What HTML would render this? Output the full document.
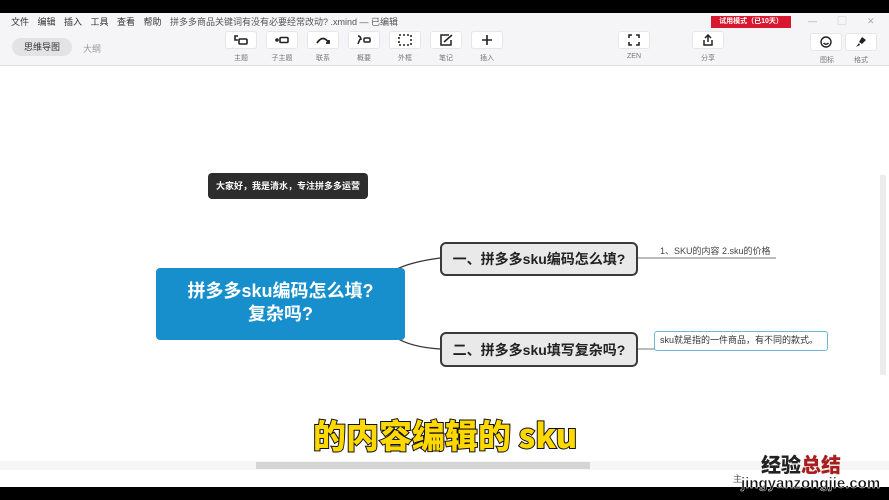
<!DOCTYPE html>
<html><head><meta charset="utf-8"><style>
*{margin:0;padding:0;box-sizing:border-box}
body{width:889px;height:500px;position:relative;overflow:hidden;background:#fff;font-family:"Liberation Sans","Noto Sans CJK SC",sans-serif;color:#333}
.a{position:absolute}
.tb{position:absolute;top:31px;width:32px;height:18px;border:1px solid #e6e6e6;border-radius:3px;background:#fff;display:flex;align-items:center;justify-content:center}
.tl{position:absolute;top:53px;font-size:7px;color:#777;width:40px;text-align:center}
.node{position:absolute;background:#e9e9e9;border:2px solid #3a3a3a;border-radius:6px;font-weight:bold;font-size:14px;color:#222;display:flex;align-items:center;justify-content:center}
svg.i{width:16px;height:12px}
</style></head><body>
<div class="a" style="left:0;top:0;width:889px;height:13px;background:#000"></div>
<div class="a" style="left:0;top:13px;width:889px;height:53px;background:#f5f5f7;border-bottom:1px solid #e2e2e2"></div>
<div class="a" style="left:11px;top:15px;font-size:9px;color:#333;word-spacing:6px;white-space:nowrap">文件 编辑 插入 工具 查看 帮助 <span style="word-spacing:0;color:#555">拼多多商品关键词有没有必要经常改动? .xmind — 已编辑</span></div>
<div class="a" style="left:711px;top:16px;width:80px;height:12px;background:#d8182e;color:#fff;font-size:7px;font-weight:bold;text-align:center;line-height:12px">试用模式（已10天）</div>
<div class="a" style="left:808px;top:14px;font-size:9px;color:#aaa;word-spacing:18px">— ▢ ✕</div>
<div class="a" style="left:12px;top:38px;width:60px;height:18px;border-radius:9px;background:#e3e3e5;font-size:9px;color:#333;text-align:center;line-height:18px">思维导图</div>
<div class="a" style="left:83px;top:42px;font-size:9px;color:#999">大纲</div>
<div class="tb" style="left:225px"><svg class="i" viewBox="0 0 16 12" fill="none" stroke="#222" stroke-width="1.6"><path d="M5 2H2v4h3"/><rect x="6" y="5" width="8" height="5" rx="1"/></svg></div><div class="tl" style="left:221px">主题</div>
<div class="tb" style="left:266px"><svg class="i" viewBox="0 0 16 12" fill="none" stroke="#222" stroke-width="1.6"><circle cx="3" cy="6" r="1" fill="#222"/><rect x="6" y="3.5" width="8" height="5" rx="1"/></svg></div><div class="tl" style="left:262px">子主题</div>
<div class="tb" style="left:307px"><svg class="i" viewBox="0 0 16 12" fill="none" stroke="#222" stroke-width="1.8"><path d="M2 9Q8 0 14 9"/><path d="M11 9h3V6"/></svg></div><div class="tl" style="left:303px">联系</div>
<div class="tb" style="left:348px"><svg class="i" viewBox="0 0 16 12" fill="none" stroke="#222" stroke-width="1.5"><path d="M2 2q3 0 3 4q0-4-3 4"/><rect x="8" y="4" width="6" height="4" rx="1"/></svg></div><div class="tl" style="left:344px">概要</div>
<div class="tb" style="left:389px"><svg class="i" viewBox="0 0 16 12" fill="none" stroke="#222" stroke-width="1.6" stroke-dasharray="2 2"><rect x="2" y="1" width="12" height="10"/></svg></div><div class="tl" style="left:385px">外框</div>
<div class="tb" style="left:430px"><svg class="i" viewBox="0 0 16 12" fill="none" stroke="#222" stroke-width="1.5"><path d="M11 1H3v10h10V6"/><path d="M6 8l8-7"/></svg></div><div class="tl" style="left:426px">笔记</div>
<div class="tb" style="left:471px"><svg class="i" viewBox="0 0 16 12" stroke="#222" stroke-width="1.6"><path d="M8 1v10M3 6h10"/></svg></div><div class="tl" style="left:467px">插入</div>
<div class="tb" style="left:618px"><svg class="i" viewBox="0 0 16 12" fill="none" stroke="#222" stroke-width="1.6"><path d="M3 4V1h3M10 1h3v3M13 8v3h-3M6 11H3V8"/></svg></div><div class="tl" style="left:614px">ZEN</div>
<div class="tb" style="left:692px"><svg class="i" viewBox="0 0 16 12" fill="none" stroke="#222" stroke-width="1.5"><path d="M8 8V1M5 4l3-3 3 3M4 6v5h8V6"/></svg></div><div class="tl" style="left:688px">分享</div>
<div class="tb" style="left:810px;top:33px"><svg class="i" viewBox="0 0 16 12" fill="none" stroke="#222" stroke-width="1.4"><circle cx="8" cy="6" r="5"/><path d="M5.5 7q2.5 2.5 5 0"/></svg></div><div class="tl" style="left:807px;top:55px">图标</div>
<div class="tb" style="left:845px;top:33px"><svg class="i" viewBox="0 0 16 12"><path d="M9 1l4 3-4 4-3-2z" fill="#222"/><path d="M6 7l-3 4 4-2" fill="#222"/></svg></div><div class="tl" style="left:841px;top:55px">格式</div>

<svg class="a" style="left:0;top:0" width="889" height="500">
<path d="M395 270 Q410 262 440 258" stroke="#333" stroke-width="1.3" fill="none"/>
<path d="M395 337 Q410 347 440 349" stroke="#333" stroke-width="1.3" fill="none"/>
<line x1="637" y1="258" x2="776" y2="258" stroke="#777" stroke-width="1"/>
<line x1="637" y1="349" x2="655" y2="349" stroke="#777" stroke-width="1"/>
</svg>
<div class="a" style="left:208px;top:173px;width:160px;height:26px;background:#2d2d2d;border-radius:4px;color:#fff;font-size:9px;font-weight:bold;text-align:center;line-height:26px">大家好，我是清水，专注拼多多运营</div>
<div class="a" style="left:156px;top:268px;width:249px;height:72px;background:#168fcc;border-radius:4px;color:#fff;font-size:18px;font-weight:bold;text-align:center;line-height:23px;padding-top:12px">拼多多sku编码怎么填?<br>复杂吗?</div>
<div class="node" style="left:440px;top:242px;width:198px;height:34px">一、拼多多sku编码怎么填?</div>
<div class="node" style="left:440px;top:332px;width:198px;height:35px">二、拼多多sku填写复杂吗?</div>
<div class="a" style="left:660px;top:244px;font-size:9px;color:#444">1、SKU的内容 2.sku的价格</div>
<div class="a" style="left:654px;top:331px;width:174px;height:20px;border:1.5px solid #6bb8d8;border-radius:3px;font-size:9px;color:#333;line-height:17px;padding-left:5px">sku就是指的一件商品，有不同的款式。</div>
<div class="a" style="left:880px;top:175px;width:6px;height:200px;background:#ececec"></div>
<div class="a" style="left:313px;top:410px;font-size:33px;font-weight:900;color:#ffd800;-webkit-text-stroke:2px #111;paint-order:stroke fill;font-family:'Noto Sans CJK SC',sans-serif">的内容编辑的 sku</div>
<div class="a" style="left:0;top:461px;width:889px;height:9px;background:#f6f6f6"></div>
<div class="a" style="left:256px;top:462px;width:334px;height:7px;background:#d5d5d5"></div>
<div class="a" style="left:733px;top:472px;font-size:9px;color:#555">主</div>
<div class="a" style="left:0;top:487px;width:889px;height:13px;background:#000"></div>
<div class="a" style="left:761px;top:452px;font-size:20px;font-weight:900;color:#222;font-family:'Noto Sans CJK SC',sans-serif;line-height:24px">经验<span style="color:#a81e1e">总结</span></div>
<div class="a" style="left:741px;top:476px;font-size:15px;font-weight:bold;color:#111;line-height:16px;-webkit-text-stroke:0.4px #fff">jingyanzongjie.com</div>
</body></html>
